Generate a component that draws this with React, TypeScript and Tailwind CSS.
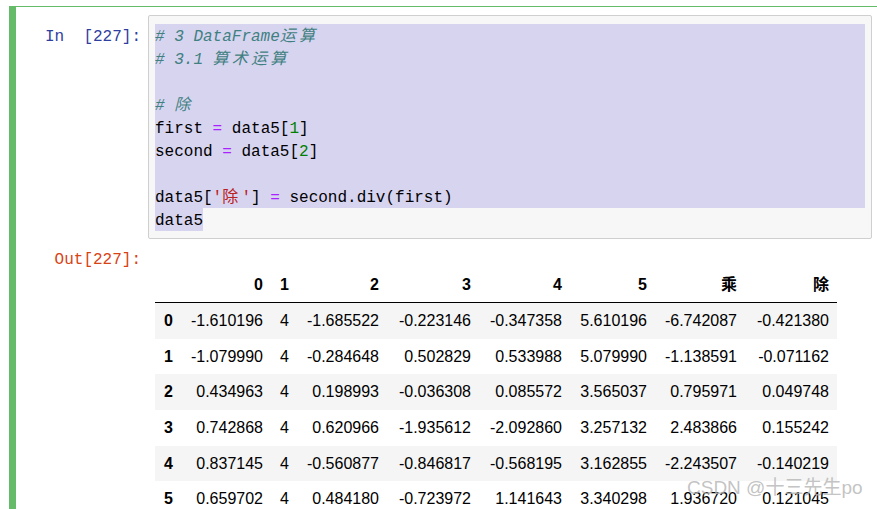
import React from 'react';

const mono = "font-['Liberation_Mono','Noto_Sans_CJK_SC',monospace]";
const sans = "font-['Liberation_Sans','Noto_Sans_CJK_SC',sans-serif]";

// column widths measured off the rendered pandas table
const cols = 'grid-cols-[26px_90px_26px_90px_92px_91px_85px_90px_92px]';

const header = ['', '0', '1', '2', '3', '4', '5', '乘', '除'];

const rows: string[][] = [
  ['0', '-1.610196', '4', '-1.685522', '-0.223146', '-0.347358', '5.610196', '-6.742087', '-0.421380'],
  ['1', '-1.079990', '4', '-0.284648', '0.502829', '0.533988', '5.079990', '-1.138591', '-0.071162'],
  ['2', '0.434963', '4', '0.198993', '-0.036308', '0.085572', '3.565037', '0.795971', '0.049748'],
  ['3', '0.742868', '4', '0.620966', '-1.935612', '-2.092860', '3.257132', '2.483866', '0.155242'],
  ['4', '0.837145', '4', '-0.560877', '-0.846817', '-0.568195', '3.162855', '-2.243507', '-0.140219'],
  ['5', '0.659702', '4', '0.484180', '-0.723972', '1.141643', '3.340298', '1.936720', '0.121045'],
];

function Cjk({ children }: { children: React.ReactNode }) {
  // CJK glyphs take two monospace cells in the notebook font
  return <span className="tracking-[3.2px]">{children}</span>;
}

function Comment({ children }: { children: React.ReactNode }) {
  return <span className="italic text-[#408080]">{children}</span>;
}

const Op = () => <span className="text-[#aa22ff]">=</span>;

function Line({ children }: { children?: React.ReactNode }) {
  return (
    <div className="h-[23px] bg-[#d7d4f0] whitespace-pre">
      <span className="relative top-[2px]">{children}</span>
    </div>
  );
}

export default function App() {
  return (
    <div className="relative w-[877px] h-[509px] overflow-hidden bg-white">
      <div className="ml-[9px] mt-[6px] border-t border-l-[7px] border-[#66bb6a] pt-[8px] pb-4">
        {/* Input */}
        <div className="flex">
          <div className={`w-[132px] shrink-0 pr-[7px] pt-[11px] text-right text-[16px] leading-[23px] text-[#303f9f] whitespace-pre ${mono}`}>
            In  [227]:
          </div>
          <div className="flex-1 mr-[5px] border border-[#cfcfcf] rounded-[2px] bg-[#f7f7f7] px-[6px] pt-[8px] pb-[7px]">
            <div className={`text-[16px] leading-[23px] text-black ${mono}`}>
              <Line><Comment># 3 DataFrame<Cjk>运算</Cjk></Comment></Line>
              <Line><Comment># 3.1 <Cjk>算术运算</Cjk></Comment></Line>
              <Line />
              <Line><Comment># <Cjk>除</Cjk></Comment></Line>
              <Line>first <Op /> data5[<span className="text-[#008000]">1</span>]</Line>
              <Line>second <Op /> data5[<span className="text-[#008000]">2</span>]</Line>
              <Line />
              <Line>
                data5[<span className="text-[#ba2121]">'<Cjk>除</Cjk>'</span>] <Op /> second.div(first)
              </Line>
              <div className="h-[23px] whitespace-pre">
                <span className="inline-block h-[23px] bg-[#d7d4f0]">
                  <span className="relative top-[2px]">data5</span>
                </span>
              </div>
            </div>
          </div>
        </div>

        {/* Output */}
        <div className="flex mt-[8px]">
          <div className={`w-[132px] shrink-0 pr-[7px] pt-[2px] text-right text-[16px] leading-[23px] text-[#d84315] ${mono}`}>
            Out[227]:
          </div>
          <div className={`pl-[7px] pt-[21px] text-[16px] text-black ${sans}`}>
            <div className={`grid ${cols} h-[35px] items-center border-b border-black font-bold`}>
              {header.map((h, i) => (
                <div key={i} className="pr-[8px] text-right">{h}</div>
              ))}
            </div>
            {rows.map((r, ri) => (
              <div
                key={ri}
                className={`grid ${cols} h-[35.7px] items-center ${ri % 2 === 0 ? 'bg-[#f5f5f5]' : 'bg-white'}`}
              >
                {r.map((c, ci) => (
                  <div key={ci} className={`pr-[8px] text-right ${ci === 0 ? 'font-bold' : ''}`}>{c}</div>
                ))}
              </div>
            ))}
          </div>
        </div>
      </div>

      {/* watermark */}
      <div
        className={`absolute left-[687px] top-[476px] text-[19px] leading-[24px] text-[#b4b4b4]/80 whitespace-nowrap ${sans}`}
      >
        CSDN @十三先生po
      </div>
    </div>
  );
}
